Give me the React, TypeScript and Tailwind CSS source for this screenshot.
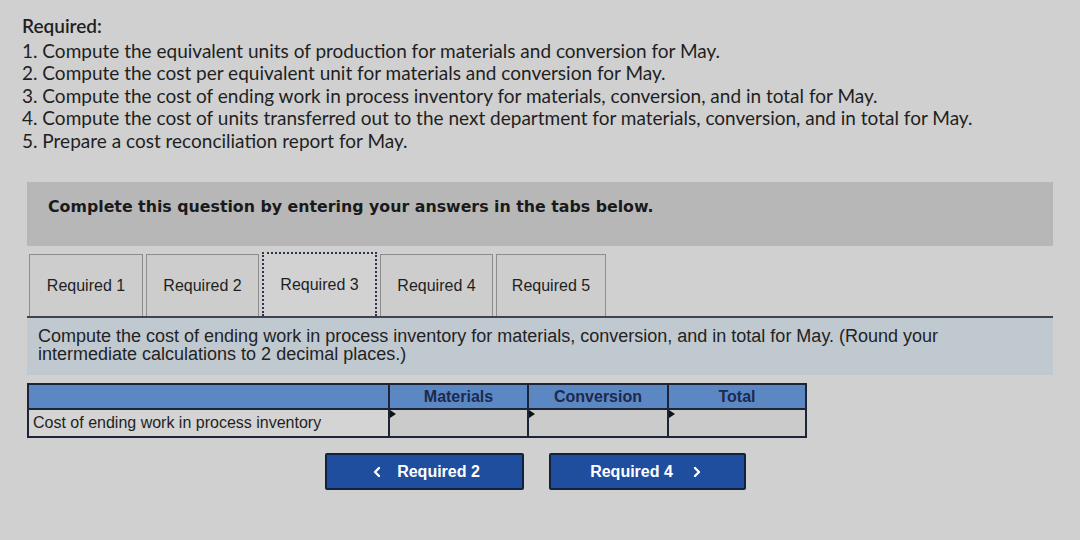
import { ChevronLeft, ChevronRight } from "lucide-react"

const requirements = [
  "1. Compute the equivalent units of production for materials and conversion for May.",
  "2. Compute the cost per equivalent unit for materials and conversion for May.",
  "3. Compute the cost of ending work in process inventory for materials, conversion, and in total for May.",
  "4. Compute the cost of units transferred out to the next department for materials, conversion, and in total for May.",
  "5. Prepare a cost reconciliation report for May.",
]

const tabs = [
  { label: "Required 1", w: "w-[114px]" },
  { label: "Required 2", w: "w-[113px]" },
  { label: "Required 3", w: "w-[115px]" },
  { label: "Required 4", w: "w-[113px]" },
  { label: "Required 5", w: "w-[110px]" },
]

function InputCell({ w }: { w: string }) {
  return (
    <div className={`relative ${w} h-full bg-[#cbcbcb] border-l-2 border-[#1d2438]`}>
      {/* entry marker */}
      <div className="absolute top-0 left-0 w-0 h-0 border-y-[4px] border-y-transparent border-l-[6px] border-l-[#111]" />
    </div>
  )
}

export default function App() {
  return (
    <div className="w-[1080px] h-[540px] bg-[#d0d0d0] overflow-hidden">
      {/* Required list */}
      <div className="pl-[22px] pt-[15px] font-['Lato',sans-serif] text-[19px] leading-[22.5px] text-[#1f1f1f]">
        <p className="font-semibold mb-[2px]">Required:</p>
        {requirements.map((r) => (
          <p key={r}>{r}</p>
        ))}
      </div>

      {/* instruction band */}
      <div className="mx-[27px] mt-[30px] h-[64px] bg-[#b7b7b7] pl-[21px] pt-[15px]">
        <p className="font-['DejaVu_Sans',sans-serif] font-bold text-[15.8px] leading-[20px] text-[#1a1a1a]">
          Complete this question by entering your answers in the tabs below.
        </p>
      </div>

      {/* tabs */}
      <div className="mx-[27px] mt-[6px] border-b-2 border-[#3e4450] flex items-end gap-[3px] pl-[2px] h-[66px] font-['Liberation_Sans',sans-serif] text-[16px] text-[#1f1f1f]">
        {tabs.map((t, i) => (
          <div
            key={t.label}
            className={`${t.w} flex items-center justify-center ${
              i === 2
                ? "h-[64px] border-2 border-dotted border-[#2a3550] border-b-0 bg-[#d2d2d2]"
                : "h-[62px] border border-b-0 border-[#8d8d8d] bg-[#cdcdcd]"
            }`}
          >
            {t.label}
          </div>
        ))}
      </div>

      {/* question text */}
      <div className="mx-[27px] h-[57px] bg-[#c0c9d0] pl-[11px] pt-[9px] font-['Liberation_Sans',sans-serif] text-[18px] leading-[18px] text-[#232323]">
        <p>
          Compute the cost of ending work in process inventory for materials, conversion, and in total for May. (Round your
        </p>
        <p>intermediate calculations to 2 decimal places.)</p>
      </div>

      {/* table */}
      <div className="ml-[27px] mt-[8px] w-[780px] border-2 border-[#1d2438] font-['Liberation_Sans',sans-serif]">
        <div className="flex h-[25px] bg-[#5b87c2] text-[16px] font-bold text-[#1b2a4e] border-b-2 border-[#1d2438]">
          <div className="w-[359px]" />
          <div className="w-[139px] border-l-2 border-[#1d2438] flex items-center justify-center">Materials</div>
          <div className="w-[140px] border-l-2 border-[#1d2438] flex items-center justify-center">Conversion</div>
          <div className="flex-1 border-l-2 border-[#1d2438] flex items-center justify-center">Total</div>
        </div>
        <div className="flex h-[26px] bg-[#d4d4d4]">
          <div className="w-[359px] pl-[4px] flex items-center text-[16px] text-[#1f1f1f]">
            Cost of ending work in process inventory
          </div>
          <InputCell w="w-[139px]" />
          <InputCell w="w-[140px]" />
          <div className="flex-1 h-full">
            <InputCell w="w-full" />
          </div>
        </div>
      </div>

      {/* navigation buttons */}
      <div className="flex ml-[325px] mt-[15px] gap-[25px] font-['Liberation_Sans',sans-serif] font-bold text-[16px] text-white">
        <button className="w-[199px] h-[37px] bg-[#1f4e9f] border-2 border-[#14213d] rounded-[2px] flex items-center justify-center gap-[12px]">
          <ChevronLeft size={16} strokeWidth={3.5} />
          <span>Required 2</span>
        </button>
        <button className="w-[197px] h-[37px] bg-[#1f4e9f] border-2 border-[#14213d] rounded-[2px] flex items-center justify-center gap-[16px]">
          <span>Required 4</span>
          <ChevronRight size={16} strokeWidth={3.5} />
        </button>
      </div>
    </div>
  )
}
